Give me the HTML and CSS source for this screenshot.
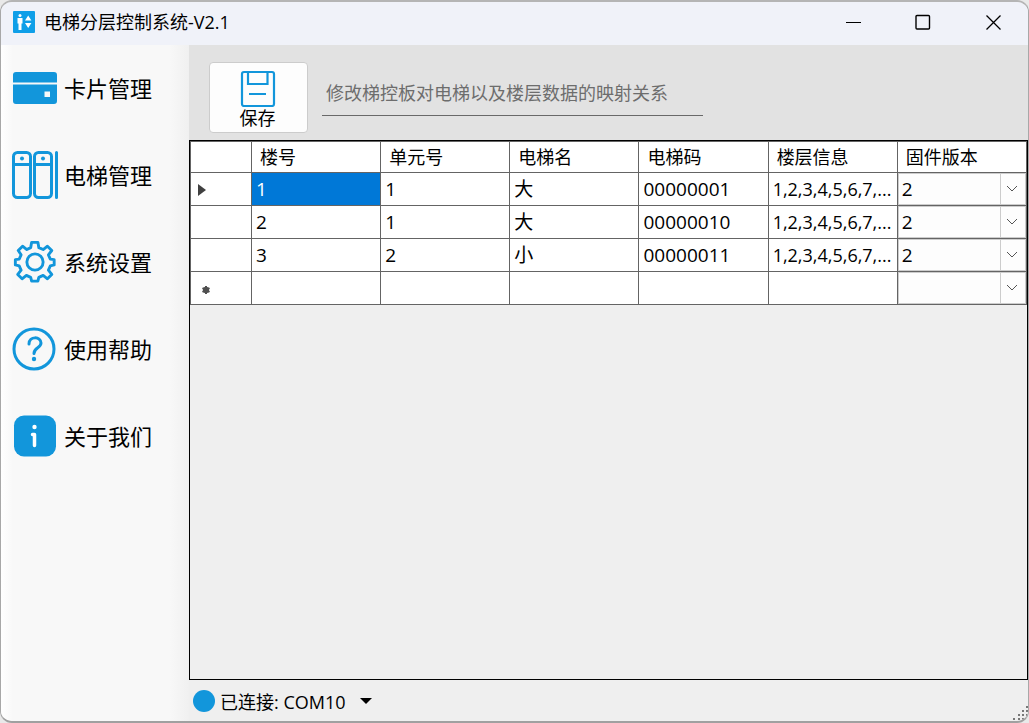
FILE: index.html
```
<!DOCTYPE html>
<html lang="zh-Hans">
  <head>
    <meta charset="UTF-8" />
    <meta name="viewport" content="width=device-width, initial-scale=1" />
    <title>电梯分层控制系统-V2.1</title>
    <link rel="stylesheet" href="styles.css">
  </head>
  <body>
    <div class="window">
      <header class="title-bar">
        <svg class="app-icon" viewBox="0 0 22 22">
          <rect width="22" height="22" rx="1" fill="#0f9fe8" />
          <circle cx="7" cy="4.500" r="1.500" fill="#fff" />
          <path d="M4.500 7h5v5.500H8.500V19h-3v-6.500h-1zM12 9.500l3.200-5 3.200 5zM12 12h6.400l-3.200 5z" fill="#fff" />
        </svg>
        <h1>电梯分层控制系统-V2.1</h1>
        <div class="window-buttons">
          <button type="button" aria-label="最小化">
            <svg viewBox="0 0 16 16"><path d="M1 8.500h15" /></svg>
          </button>
          <button type="button" aria-label="最大化">
            <svg viewBox="0 0 16 16"><rect x="1" y="1.500" width="13.500" height="13.500" rx="1" stroke-width="1.400" /></svg>
          </button>
          <button type="button" aria-label="关闭">
            <svg viewBox="0 0 16 16"><path d="M1.500 1.500l14 14M15.500 1.500l-14 14" stroke-width="1.300" /></svg>
          </button>
        </div>
      </header>

      <div class="main">
        <nav class="sidebar">
          <button type="button" class="nav-item">
            <svg viewBox="0 0 46 50">
              <path d="M4 9h38a3 3 0 0 1 3 3v7.500H1V12a3 3 0 0 1 3-3zM1 21.500h44V38a3 3 0 0 1-3 3H4a3 3 0 0 1-3-3zM32.500 28.500v5.500h5.500v-5.500z" fill="#1296db" fill-rule="evenodd" />
            </svg>
            <span>卡片管理</span>
          </button>
          <button type="button" class="nav-item">
            <svg viewBox="0 0 46 50" class="line-icon">
              <rect x="1.500" y="2.500" width="17" height="45" rx="4" />
              <rect x="22.500" y="2.500" width="17" height="45" rx="4" />
              <path d="M1.500 14.500h17M22.500 14.500h17M44.500 2.500v45" />
              <g class="dot"><circle cx="10" cy="8.500" r="2" /><circle cx="31" cy="8.500" r="2" /></g>
            </svg>
            <span>电梯管理</span>
          </button>
          <button type="button" class="nav-item">
            <svg viewBox="-1 0 48 52" class="line-icon">
              <path d="M19.500 5.500h6.500l1 5.500 4.500 2 4.500-3.500 4.500 4.500-3.500 4.500 2 4.500 4 .5v5.500l-4 1-2 4.500 3.500 4.500-4.500 4.500-4.500-3.500-4.500 2-1 4h-6.500l-1-4-4.500-2-4.500 3.500-4.500-4.500 3.500-4.500-2-4.500-4-1v-5.500l4-.5 2-4.500L5.500 14l4.500-4.500 4.500 3.500 4-2z" />
              <circle cx="23" cy="26" r="8.500" />
            </svg>
            <span>系统设置</span>
          </button>
          <button type="button" class="nav-item">
            <svg viewBox="0 0 46 50" class="line-icon">
              <circle cx="22" cy="25" r="20" />
              <path d="M17 20c0-8 12-8 12-1 0 5-7 4.500-7 10.500" />
              <circle class="dot" cx="22" cy="35" r="2.200" />
            </svg>
            <span>使用帮助</span>
          </button>
          <button type="button" class="nav-item">
            <svg viewBox="0 0 46 50">
              <rect x="2" y="4.500" width="42" height="41" rx="10" fill="#1296db" />
              <circle cx="22.500" cy="16" r="2.200" fill="#fff" />
              <path d="M20.500 23.500h2v11" fill="none" stroke="#fff" stroke-width="3.500" stroke-linecap="round" stroke-linejoin="round" />
            </svg>
            <span>关于我们</span>
          </button>
        </nav>

        <main class="content">
          <div class="toolbar">
            <button type="button" class="save-button">
              <svg viewBox="0 0 36 38">
                <rect x="2" y="3" width="32" height="34" rx="2" />
                <path d="M8 3v12h19.500V3M9 25h17" />
              </svg>
              <span>保存</span>
            </button>
            <input class="hint" type="text" aria-label="说明" value="修改梯控板对电梯以及楼层数据的映射关系" readonly />
          </div>

          <div class="grid-box">
            <table>
              <thead>
                <tr>
                  <th class="row-head"></th>
                  <th>楼号</th>
                  <th>单元号</th>
                  <th>电梯名</th>
                  <th>电梯码</th>
                  <th>楼层信息</th>
                  <th>固件版本</th>
                </tr>
              </thead>
              <tbody>
                <tr>
                  <td class="row-head"><svg viewBox="0 0 10 14"><path d="M1 2l8 6-8 6z" fill="#404040" /></svg></td>
                  <td class="selected">1</td>
                  <td>1</td>
                  <td>大</td>
                  <td>00000001</td>
                  <td class="floors">1,2,3,4,5,6,7,...</td>
                  <td class="combo-cell">
                    <div class="combo">
                      <select aria-label="固件版本"><option>2</option></select>
                      <svg viewBox="0 0 12 8"><path d="M1 1l5 5 5-5" /></svg>
                    </div>
                  </td>
                </tr>
                <tr>
                  <td class="row-head"></td>
                  <td>2</td>
                  <td>1</td>
                  <td>大</td>
                  <td>00000010</td>
                  <td class="floors">1,2,3,4,5,6,7,...</td>
                  <td class="combo-cell">
                    <div class="combo">
                      <select aria-label="固件版本"><option>2</option></select>
                      <svg viewBox="0 0 12 8"><path d="M1 1l5 5 5-5" /></svg>
                    </div>
                  </td>
                </tr>
                <tr>
                  <td class="row-head"></td>
                  <td>3</td>
                  <td>2</td>
                  <td>小</td>
                  <td>00000011</td>
                  <td class="floors">1,2,3,4,5,6,7,...</td>
                  <td class="combo-cell">
                    <div class="combo">
                      <select aria-label="固件版本"><option>2</option></select>
                      <svg viewBox="0 0 12 8"><path d="M1 1l5 5 5-5" /></svg>
                    </div>
                  </td>
                </tr>
                <tr>
                  <td class="row-head new-row"><svg viewBox="0 0 10 14"><path d="M5 5v8M1.500 7l7 4M8.500 7l-7 4" stroke="#505050" stroke-width="2" /><circle cx="5" cy="9" r="3.200" fill="#505050" /></svg></td>
                  <td></td>
                  <td></td>
                  <td></td>
                  <td></td>
                  <td></td>
                  <td class="combo-cell">
                    <div class="combo">
                      <select aria-label="固件版本"><option></option></select>
                      <svg viewBox="0 0 12 8"><path d="M1 1l5 5 5-5" /></svg>
                    </div>
                  </td>
                </tr>
              </tbody>
            </table>
          </div>

          <footer class="status-bar">
            <button type="button" class="port-button">
              <span class="status-dot"></span>
              <span>已连接: COM10</span>
              <svg viewBox="0 0 12 6"><path d="M0 0h12L6 6z" /></svg>
            </button>
            <svg class="grip" viewBox="0 0 16 16">
              <path d="M14 1h2v2h-2zM10 5h2v2h-2zM14 5h2v2h-2zM6 9h2v2H6zM10 9h2v2h-2zM14 9h2v2h-2zM1 13h2v2H1zM6 13h2v2H6zM10 13h2v2h-2z" fill="#777" />
            </svg>
          </footer>
        </main>
      </div>
    </div>
  </body>
</html>
```
FILE: styles.css
```
* {
  box-sizing: border-box;
}

body {
  margin: 0;
  background: #e9e9e9;
  color: #000;
  font-family: "Open Sans", "Noto Sans CJK SC", sans-serif;
  font-size: 18px;
  font-weight: 380;
}

button,
input,
select {
  padding: 0;
  border: none;
  background: none;
  color: inherit;
  font: inherit;
}

/* 窗口 */
.window {
  display: flex;
  flex-direction: column;
  height: 100vh;
  border: 1px solid #a8a8a8;
  border-top: 2px solid #b5b5b5;
  border-bottom: 2px solid #a0a0a0;
  border-radius: 12px;
  overflow: hidden;
}

.title-bar {
  display: flex;
  align-items: center;
  height: 43px;
  padding: 0 0 3px 12px;
  background: #f0f2f9;
}

.app-icon {
  width: 22px;
  height: 22px;
}

.title-bar h1 {
  margin: 0 0 0 9px;
  padding-bottom: 2px;
  font-size: 18px;
  font-weight: inherit;
}

.window-buttons {
  display: flex;
  height: 100%;
  margin-left: auto;
}

.window-buttons button {
  display: grid;
  place-items: center;
  width: 70px;
}

.window-buttons svg {
  width: 16px;
  height: 16px;
  fill: none;
  stroke: #000;
}

.main {
  display: flex;
  flex: 1;
  min-height: 0;
}

/* 左侧导航 */
.sidebar {
  flex: none;
  width: 188px;
  background: linear-gradient(90deg, #fff, #f8f8f8 12px, #f8f8f8 168px, #f0f0f0);
}

.nav-item {
  display: flex;
  align-items: center;
  gap: 6px;
  width: 100%;
  height: 87px;
  padding: 0 0 1px 11px;
  font-size: 22px;
}

.nav-item span {
  padding-bottom: 2px;
}

.nav-item svg {
  width: 46px;
  height: 50px;
}

.line-icon {
  fill: none;
  stroke: #1296db;
  stroke-width: 3;
  stroke-linejoin: round;
  stroke-linecap: round;
}

.dot {
  fill: #1296db;
  stroke: none;
}

/* 右侧内容 */
.content {
  display: flex;
  flex-direction: column;
  flex: 1;
  min-width: 0;
  background: #efefef;
}

.toolbar {
  display: flex;
  align-items: flex-start;
  gap: 14px;
  height: 95px;
  padding: 17px 20px 0;
  background: #e2e2e2;
}

.save-button {
  display: flex;
  flex-direction: column;
  align-items: center;
  width: 99px;
  height: 71px;
  padding: 6px 2px 0 0;
  border: 1px solid #ccc;
  border-radius: 4px;
  background: #fdfdfd;
  line-height: 22px;
}

.save-button svg {
  width: 36px;
  height: 38px;
  fill: none;
  stroke: #1296db;
  stroke-width: 2.2;
}

.hint {
  width: 381px;
  height: 54px;
  padding: 6px 4px 0;
  border-bottom: 1px solid #696969;
  color: #6d6d6d;
}

/* 表格 */
.grid-box {
  flex: 1;
  border: 1px solid #000;
}

table {
  width: 100%;
  table-layout: fixed;
  border: 1px solid #646464;
  border-width: 1px 0 0 1px;
  border-spacing: 0;
  background: #fff;
}

th,
td {
  height: 33px;
  padding: 0 4px;
  border: 1px solid #646464;
  border-width: 0 1px 1px 0;
  line-height: 24px;
  text-align: left;
  white-space: nowrap;
}

th {
  height: 31px;
  padding: 0 8px;
  font-weight: inherit;
}

td {
  font-size: 19px;
}

.row-head {
  width: 61px;
  padding: 0 6px;
}

.row-head svg {
  display: block;
  width: 10px;
  height: 14px;
}

.new-row {
  padding-left: 10px;
}

.selected {
  background: #0078d7;
  color: #fff;
}

.floors {
  font-size: 18px;
}

.combo-cell {
  padding: 0;
}

.combo {
  position: relative;
  height: 32px;
  border: 1px solid #ccc;
  background: linear-gradient(#ccc, #ccc) right 24px top / 1px 100% no-repeat #fdfdfd;
}

.combo select {
  width: 100%;
  height: 30px;
  padding-left: 3px;
  appearance: none;
}

.combo svg {
  position: absolute;
  top: 11px;
  right: 7px;
  width: 12px;
  height: 8px;
  fill: none;
  stroke: #555;
  pointer-events: none;
}

/* 状态栏 */
.status-bar {
  display: flex;
  align-items: center;
  justify-content: space-between;
  height: 41px;
}

.port-button {
  display: flex;
  align-items: center;
  padding: 1px 0 0 4px;
  gap: 5px;
}

.status-dot {
  width: 22px;
  height: 22px;
  border-radius: 50%;
  background: #1296db;
}

.port-button svg {
  width: 12px;
  height: 6px;
  margin-left: 9px;
}

.grip {
  align-self: flex-end;
  width: 16px;
  height: 16px;
}
```
